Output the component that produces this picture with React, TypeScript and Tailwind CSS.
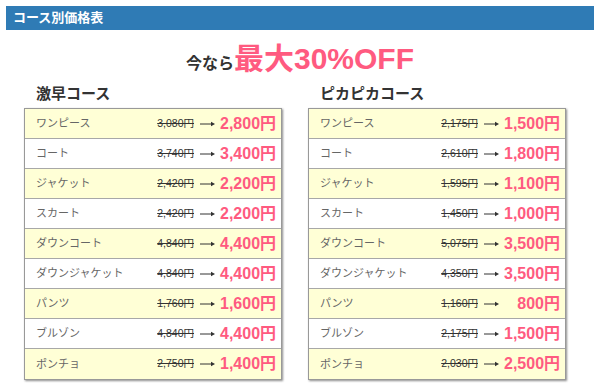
const FONT = "font-['Liberation_Sans','Noto_Sans_CJK_JP',sans-serif]";

type Row = { name: string; before: string; after: string };

const gekihaya: Row[] = [
  { name: "ワンピース", before: "3,080円", after: "2,800円" },
  { name: "コート", before: "3,740円", after: "3,400円" },
  { name: "ジャケット", before: "2,420円", after: "2,200円" },
  { name: "スカート", before: "2,420円", after: "2,200円" },
  { name: "ダウンコート", before: "4,840円", after: "4,400円" },
  { name: "ダウンジャケット", before: "4,840円", after: "4,400円" },
  { name: "パンツ", before: "1,760円", after: "1,600円" },
  { name: "ブルゾン", before: "4,840円", after: "4,400円" },
  { name: "ポンチョ", before: "2,750円", after: "1,400円" },
];

const pikapika: Row[] = [
  { name: "ワンピース", before: "2,175円", after: "1,500円" },
  { name: "コート", before: "2,610円", after: "1,800円" },
  { name: "ジャケット", before: "1,595円", after: "1,100円" },
  { name: "スカート", before: "1,450円", after: "1,000円" },
  { name: "ダウンコート", before: "5,075円", after: "3,500円" },
  { name: "ダウンジャケット", before: "4,350円", after: "3,500円" },
  { name: "パンツ", before: "1,160円", after: "800円" },
  { name: "ブルゾン", before: "2,175円", after: "1,500円" },
  { name: "ポンチョ", before: "2,030円", after: "2,500円" },
];

// thin long arrow like the original "→"
const Arrow = () => (
  <svg width="15" height="8" viewBox="0 0 15 8" className="ml-[6px] mr-[5px] shrink-0">
    <line x1="0" y1="4" x2="13" y2="4" stroke="#333" strokeWidth="1" />
    <path d="M11 1.8 L15 4 L11 6.2 Z" fill="#333" />
  </svg>
);

function PriceTable({ title, rows }: { title: string; rows: Row[] }) {
  return (
    <div className="w-[258px]">
      <h3 className="pl-[12px] text-[15px] font-bold leading-[18px] text-[#333] mb-[5px]">{title}</h3>
      <div className="border border-[#999] shadow-[1px_1px_2px_rgba(0,0,0,0.45)]">
        {rows.map((r, i) => (
          <div
            key={r.name}
            className={`flex items-center justify-between h-[30px] pl-[11px] pr-[5px] whitespace-nowrap ${
              i % 2 === 0 ? "bg-[#ffffd6]" : "bg-white"
            } ${i < rows.length - 1 ? "border-b border-[#a8a8a8]" : ""}`}
          >
            <span className="text-[11px] text-[#666]">{r.name}</span>
            <div className="flex items-center">
              <span className="text-[10.5px] text-[#333] line-through">{r.before}</span>
              <Arrow />
              <span className="w-[56px] text-right text-[16px] font-bold text-[#ff5a80] leading-none">
                {r.after}
              </span>
            </div>
          </div>
        ))}
      </div>
    </div>
  );
}

export default function App() {
  return (
    <div className={`w-[600px] h-[387px] bg-white ${FONT} overflow-hidden`}>
      <div className="mx-[6px] mt-[6px] h-[24px] bg-[#2f7bb5] flex items-center pl-[7px]">
        <span className="text-[13px] font-bold text-white">コース別価格表</span>
      </div>
      <div className="flex items-baseline justify-center h-[55px] pt-[6px]">
        <span className="text-[16px] font-bold text-[#333]">今なら</span>
        <span className="text-[30px] font-bold text-[#ff5a80]">最大30%OFF</span>
      </div>
      <div className="flex gap-[26px] pl-[24px]">
        <PriceTable title="激早コース" rows={gekihaya} />
        <PriceTable title="ピカピカコース" rows={pikapika} />
      </div>
    </div>
  );
}
